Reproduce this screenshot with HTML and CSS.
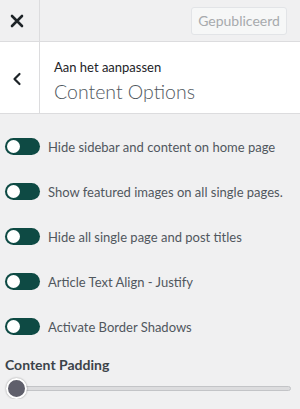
FILE: index.html
```html
<!DOCTYPE html>
<html lang="nl">
<head>
    <meta charset="UTF-8">
    <title>Content Options</title>
    <link rel="stylesheet" href="styles.css">
</head>
<body>
    <header class="topbar">
        <a href="#" class="close">
            <svg width="14" height="14" viewBox="0 0 14 14"><path d="M2 2L12 12M12 2L2 12" stroke="#1d2327" stroke-width="2.6" stroke-linecap="round"/></svg>
        </a>
        <div class="actions">
            <button class="publish" disabled>Gepubliceerd</button>
        </div>
    </header>
    <section class="section-head">
        <a href="#" class="back">
            <svg width="10" height="14" viewBox="0 0 10 14"><path d="M7.5 2L2.5 7L7.5 12" fill="none" stroke="#1d2327" stroke-width="2.2" stroke-linecap="round" stroke-linejoin="round"/></svg>
        </a>
        <div class="titles">
            <span class="sub">Aan het aanpassen</span>
            <h2>Content Options</h2>
        </div>
    </section>
    <main class="options">
        <label class="option"><span class="toggle"></span>Hide sidebar and content on home page</label>
        <label class="option"><span class="toggle"></span>Show featured images on all single pages.</label>
        <label class="option"><span class="toggle"></span>Hide all single page and post titles</label>
        <label class="option"><span class="toggle"></span>Article Text Align - Justify</label>
        <label class="option"><span class="toggle"></span>Activate Border Shadows</label>
        <div class="range-group">
            <div class="range-title">Content Padding</div>
            <div class="range">
                <span class="thumb"></span>
                <span class="track"></span>
            </div>
        </div>
    </main>
</body>
</html>
```

FILE: styles.css
```css
body {
    margin: 0;
    padding: 0;
    background: #f0f0f1;
    font-family: Lato, "Open Sans", Arial, sans-serif;
    color: #50575e;
}

.topbar {
    height: 41px;
    display: flex;
    align-items: stretch;
    background: #f0f0f1;
    border-bottom: 1px solid #dcdcde;
}

.close {
    width: 40px;
    border-right: 1px solid #dcdcde;
    display: flex;
    align-items: center;
    justify-content: center;
    padding-right: 5px;
    box-sizing: border-box;
}

.actions {
    flex: 1;
    display: flex;
    align-items: center;
    justify-content: flex-end;
    padding-right: 13px;
}

.publish {
    height: 28px;
    width: 96px;
    background: #f6f7f7;
    border: 1px solid #e2e4e7;
    border-radius: 3px;
    color: #a7aaad;
    font-family: inherit;
    font-size: 14px;
    padding: 0;
}

.section-head {
    height: 71px;
    display: flex;
    background: #fff;
    border-bottom: 1px solid #dcdcde;
}

.back {
    width: 40px;
    border-right: 1px solid #dcdcde;
    display: flex;
    align-items: center;
    justify-content: center;
    padding-right: 6px;
    padding-top: 2px;
    box-sizing: border-box;
}

.titles {
    padding: 16px 0 0 14px;
    display: flex;
    flex-direction: column;
}

.sub {
    font-size: 13px;
    color: #1d2327;
    line-height: 18px;
}

.titles h2 {
    margin: 3px 0 0;
    font-size: 19.5px;
    font-weight: 300;
    color: #50575e;
    line-height: 26px;
}

.options {
    padding: 24px 0 0 5px;
}

.option {
    display: flex;
    align-items: center;
    gap: 8px;
    height: 17px;
    margin-bottom: 28px;
    font-size: 13px;
    color: #50575e;
    white-space: nowrap;
}

.toggle {
    width: 35px;
    height: 17px;
    border-radius: 9px;
    background: #0e4a44;
    position: relative;
    flex-shrink: 0;
}

.toggle:after {
    content: '';
    position: absolute;
    left: 2px;
    top: 2px;
    width: 13px;
    height: 13px;
    border-radius: 50%;
    background: #fff;
}

.range-group {
    margin-top: -7px;
}

.range-title {
    font-size: 14px;
    font-weight: 700;
    color: #3c434a;
    line-height: 18px;
}

.range {
    display: flex;
    align-items: center;
    height: 21px;
    margin: 4px 9px 0 1px;
}

.thumb {
    width: 17px;
    height: 17px;
    flex-shrink: 0;
    border-radius: 50%;
    background: #5f5f6b;
    border: 2px solid #fff;
    box-shadow: 0 0 2px rgba(0, 0, 0, 0.4);
    position: relative;
    z-index: 1;
}

.track {
    flex: 1;
    height: 5px;
    margin-left: -6px;
    background: #dcdcde;
    border: 1px solid #c3c4c7;
    border-radius: 3px;
    box-sizing: border-box;
}
```
